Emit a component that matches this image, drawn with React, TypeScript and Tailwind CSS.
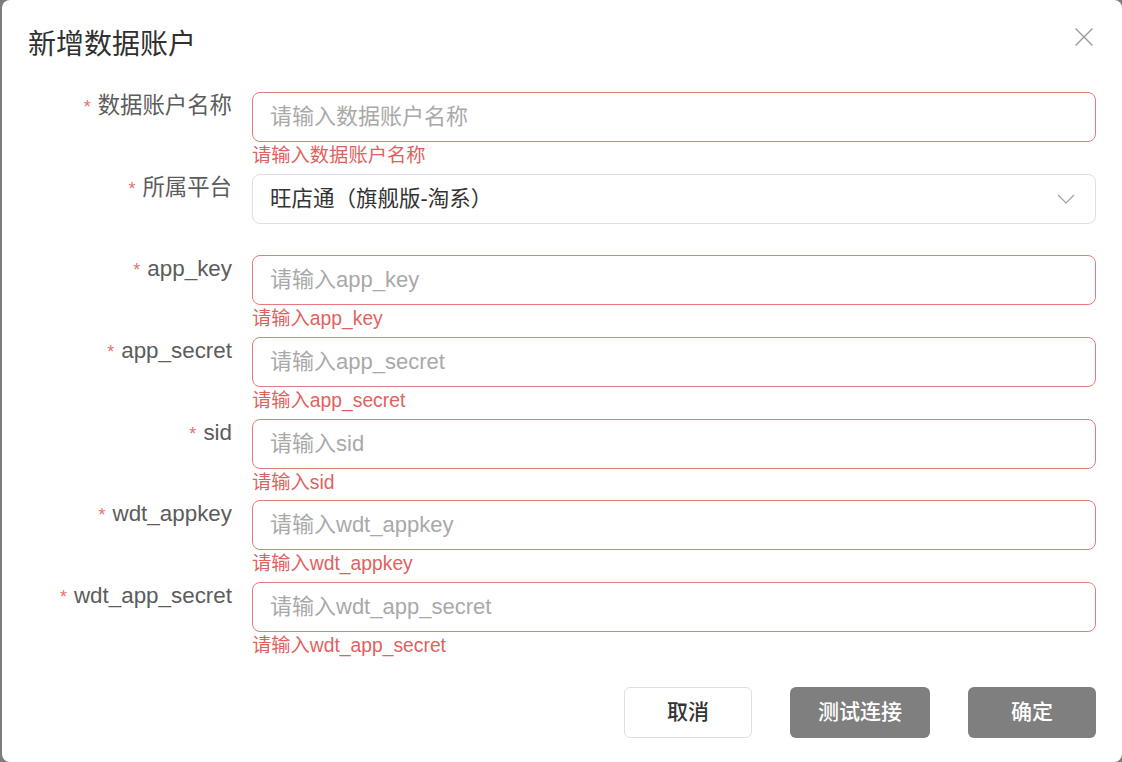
import React from 'react';

const FONT = "font-['Liberation_Sans','Noto_Sans_CJK_SC',sans-serif]";

type Field = {
  label: string;
  placeholder: string;
  error?: string;
  select?: string;
};

const fields: Field[] = [
  { label: '数据账户名称', placeholder: '请输入数据账户名称', error: '请输入数据账户名称' },
  { label: '所属平台', placeholder: '', select: '旺店通（旗舰版-淘系）' },
  { label: 'app_key', placeholder: '请输入app_key', error: '请输入app_key' },
  { label: 'app_secret', placeholder: '请输入app_secret', error: '请输入app_secret' },
  { label: 'sid', placeholder: '请输入sid', error: '请输入sid' },
  { label: 'wdt_appkey', placeholder: '请输入wdt_appkey', error: '请输入wdt_appkey' },
  { label: 'wdt_app_secret', placeholder: '请输入wdt_app_secret', error: '请输入wdt_app_secret' },
];

const FormRow: React.FC<{ field: Field }> = ({ field }) => (
  <div className="flex h-[81.67px]">
    {/* label */}
    <div className="w-[204px] shrink-0 pt-[3px] text-right text-[22.4px] leading-[22px] text-[#5c5c5c]">
      <span className="mr-[7px] text-[18px] text-[#e57373]">*</span>
      {field.label}
    </div>

    <div className="ml-[20px] flex-1">
      {field.select ? (
        <div className="flex h-[50px] items-center justify-between rounded-[8px] border border-[#dcdfe6] pl-[17px] pr-[20px] text-[21.5px] text-[#333]">
          <span>{field.select}</span>
          <svg width="18" height="10" viewBox="0 0 18 10" fill="none">
            <path d="M1 1l8 8 8-8" stroke="#a0a0a0" strokeWidth="1.2" />
          </svg>
        </div>
      ) : (
        <input
          className="block h-[50px] w-full rounded-[8px] border-[1.3px] border-[#e37d7b] px-[17px] text-[22px] text-[#333] outline-none placeholder:text-[#a9a9a9]"
          placeholder={field.placeholder}
        />
      )}
      {field.error && (
        <div className="pt-[4px] text-[19.3px] leading-[19px] text-[#e0625f]">{field.error}</div>
      )}
    </div>
  </div>
);

export default function App() {
  return (
    <div className={`flex h-[762px] w-full bg-[#7d7d7d] pl-[2px] ${FONT}`}>
      <div className="flex flex-1 flex-col rounded-[8px] bg-white px-[26px]">
        {/* header */}
        <div className="flex h-[92px] items-start justify-between">
          <h2 className="pt-[31px] text-[28px] leading-[28px] text-[#303030]">新增数据账户</h2>
          <button className="mt-[24.5px]" aria-label="close">
            <svg width="24" height="24" viewBox="0 0 24 24" fill="none">
              <path d="M3.5 3.5l17 17M20.5 3.5l-17 17" stroke="#9a9a9a" strokeWidth="1.4" />
            </svg>
          </button>
        </div>

        {/* form */}
        <div className="flex flex-col">
          {fields.map((f) => (
            <FormRow key={f.label} field={f} />
          ))}
        </div>

        {/* footer */}
        <div className="mt-[23px] flex justify-end gap-[38px]">
          <button className="h-[51px] w-[128px] rounded-[6px] border border-[#dcdfe6] bg-white text-[21px] font-medium text-[#333]">
            取消
          </button>
          <button className="h-[51px] w-[140px] rounded-[6px] bg-[#7f7f7f] text-[21px] font-medium text-white">
            测试连接
          </button>
          <button className="h-[51px] w-[128px] rounded-[6px] bg-[#7f7f7f] text-[21px] font-medium text-white">
            确定
          </button>
        </div>
      </div>
    </div>
  );
}
